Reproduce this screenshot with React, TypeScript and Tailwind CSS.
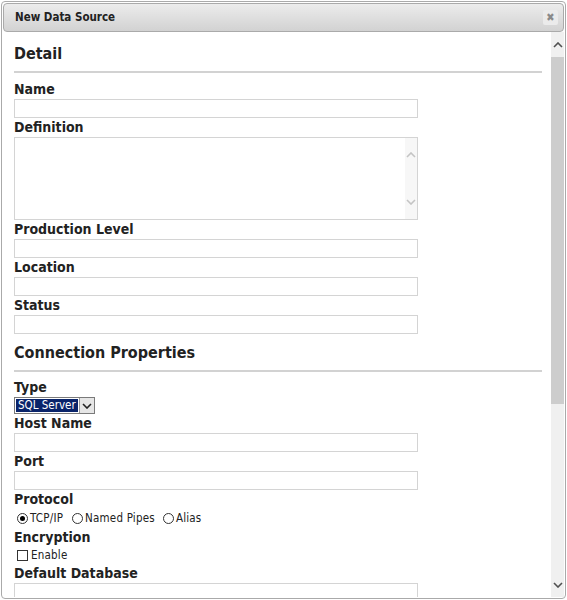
import React from "react";

const fieldFont = "font-['DejaVu_Sans_Condensed','DejaVu_Sans',sans-serif]";

function Label({ children }: { children: React.ReactNode }) {
  return (
    <div className="h-[19px] text-[14px] font-bold leading-[19px] text-[#222]">
      {children}
    </div>
  );
}

function TextInput() {
  return <div className="h-[19px] w-[404px] border border-[#d4d4d4] bg-white" />;
}

function Section({ title }: { title: string }) {
  return (
    <div>
      <div className="h-[20px] text-[16px] font-bold leading-[20px] text-[#222]">
        {title}
      </div>
      <div className="mt-[7px] h-[2px] bg-[#d2d2d2]" />
    </div>
  );
}

function Chevron({ up, className }: { up?: boolean; className?: string }) {
  return (
    <svg width="10" height="6" viewBox="0 0 10 6" className={className}>
      <path
        d={up ? "M1 5 L5 1 L9 5" : "M1 1 L5 5 L9 1"}
        fill="none"
        stroke="currentColor"
        strokeWidth="1.6"
      />
    </svg>
  );
}

function Radio({ checked }: { checked?: boolean }) {
  return (
    <span className="ml-[3px] mr-[2px] inline-flex h-[11px] w-[11px] items-center justify-center rounded-full border border-[#333] bg-white">
      {checked && <span className="h-[5px] w-[5px] rounded-full bg-black" />}
    </span>
  );
}

export default function App() {
  return (
    <div className={`h-[600px] w-[567px] overflow-hidden bg-white ${fieldFont}`}>
      <div className="ml-[1px] mt-[1px] flex h-[598px] w-[565px] flex-col rounded-[4px] border border-[#aaaaaa] bg-white p-[1px]">
        {/* title bar */}
        <div className="flex h-[29px] shrink-0 items-center justify-between rounded-[4px] border border-[#aaaaaa] bg-gradient-to-b from-[#ececec] to-[#d2d2d2] pl-[11px] pr-[5px]">
          <span className="text-[11.5px] font-bold text-[#222]">New Data Source</span>
          <span className="flex h-[15px] w-[15px] items-center justify-center rounded-[2px] bg-[#ebebeb] text-[11px] leading-none text-[#8a8a8a]">
            ✖
          </span>
        </div>

        <div className="flex min-h-0 flex-1">
          {/* form body */}
          <div className="min-w-0 flex-1 overflow-hidden pl-[11px] pr-[9px] pt-[12px]">
            <Section title="Detail" />
            <div className="mt-[7px]">
              <Label>Name</Label>
              <TextInput />
              <Label>Definition</Label>
              <div className="flex h-[83px] w-[404px] border border-[#d4d4d4] bg-white">
                <div className="flex-1" />
                <div className="flex w-[12px] flex-col items-center justify-between bg-[#f7f7f7] py-[14px] text-[#c4c4c4]">
                  <Chevron up />
                  <Chevron />
                </div>
              </div>
              <Label>Production Level</Label>
              <TextInput />
              <Label>Location</Label>
              <TextInput />
              <Label>Status</Label>
              <TextInput />
            </div>

            <div className="mt-[9px]">
              <Section title="Connection Properties" />
            </div>
            <div className="mt-[6px]">
              <Label>Type</Label>
              <div className="flex h-[17px] w-[81px] border border-[#7a7a7a] bg-white">
                <div className="m-[1px] flex flex-1 items-center bg-[#0a246a] px-[2px] text-[11.5px] leading-none text-white">
                  SQL Server
                </div>
                <div className="flex w-[15px] items-center justify-center border-l border-[#9a9a9a] bg-[#e6e6e6] text-[#222]">
                  <Chevron />
                </div>
              </div>
              <Label>Host Name</Label>
              <TextInput />
              <Label>Port</Label>
              <TextInput />
              <Label>Protocol</Label>
              <div className="flex h-[19px] items-center text-[11.5px] tracking-[0.2px] text-[#222]">
                <Radio checked />
                <span>TCP/IP</span>
                <span className="ml-[6px]" />
                <Radio />
                <span>Named Pipes</span>
                <span className="ml-[5px]" />
                <Radio />
                <span>Alias</span>
              </div>
              <Label>Encryption</Label>
              <div className="flex h-[17px] items-center text-[11.5px] tracking-[0.2px] text-[#222]">
                <span className="ml-[3px] mr-[3px] h-[11px] w-[11px] border border-[#333] bg-white" />
                <span>Enable</span>
              </div>
              <Label>Default Database</Label>
              <TextInput />
            </div>
          </div>

          {/* scrollbar */}
          <div className="flex w-[13px] shrink-0 flex-col bg-[#f0f0f0] text-[#505050]">
            <div className="flex h-[25px] items-center justify-center">
              <Chevron up />
            </div>
            <div className="h-[347px] bg-[#cdcdcd]" />
            <div className="flex-1" />
            <div className="flex h-[25px] items-center justify-center">
              <Chevron />
            </div>
          </div>
        </div>
      </div>
    </div>
  );
}
